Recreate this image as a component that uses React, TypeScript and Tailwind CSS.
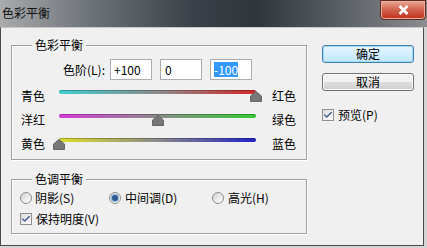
import { Check } from "lucide-react";

const sliders = [
  { left: "青色", right: "红色", value: 100, grad: "bg-[linear-gradient(to_right,#3fcfcf,#8a8a8a_50%,#d42828)]" },
  { left: "洋红", right: "绿色", value: 0, grad: "bg-[linear-gradient(to_right,#d93cd9,#8a8a8a_50%,#33cc33)]" },
  { left: "黄色", right: "蓝色", value: -100, grad: "bg-[linear-gradient(to_right,#dede2a,#8a8a8a_50%,#2323c8)]" },
];

function Thumb({ value }: { value: number }) {
  return (
    <svg
      width="12"
      height="11"
      viewBox="0 0 12 11"
      className="absolute top-[1px] -translate-x-1/2"
      style={{ left: `${((value + 100) / 200) * 100}%` }}
    >
      <path d="M6 0.5 L11.5 5 L11.5 10.5 L0.5 10.5 L0.5 5 Z" fill="#777" stroke="#666" />
    </svg>
  );
}

function CheckBox() {
  return (
    <span className="w-[12px] h-[12px] border border-[#8f8f8f] bg-[linear-gradient(135deg,#dcdcdc,#ffffff)] flex items-center justify-center">
      <Check className="w-[10px] h-[10px] text-[#4a5f97]" strokeWidth={3.5} />
    </span>
  );
}

function Radio({ on }: { on?: boolean }) {
  return (
    <span className="w-[12px] h-[12px] rounded-full border border-[#8f8f8f] bg-[linear-gradient(135deg,#d4d4d4,#ffffff)] flex items-center justify-center">
      {on && <span className="w-[6px] h-[6px] rounded-full bg-[#2f5c8c] shadow-[0_0_0_1px_#8fb8e0]" />}
    </span>
  );
}

function Group({ title, className, children }: { title: string; className: string; children: React.ReactNode }) {
  return (
    <div className={`relative border border-[#a0a0a0] shadow-[1px_1px_0_#fff,inset_1px_1px_0_#fff] ${className}`}>
      <span className="absolute -top-[9px] left-[20px] px-[3px] bg-[#f0f0f0] leading-[16px]">{title}</span>
      {children}
    </div>
  );
}

export default function App() {
  return (
    <div className="w-[427px] h-[248px] bg-[#d4d4d4] flex flex-col text-[12px] text-black font-['Noto_Sans_CJK_SC',sans-serif] overflow-hidden">
      <div className="h-[27px] shrink-0 flex justify-between bg-[linear-gradient(to_right,#a9abad,#70757a_20%,#3b4148_45%,#2f353b_60%,#5b6066_80%,#8a8d90)]">
        <span className="pl-[2px] pt-[5px] leading-[16px] text-[#111]">色彩平衡</span>
        <div className="w-[46px] h-[20px] mr-[1px] rounded-b-[4px] border border-[#5a2a22] bg-[linear-gradient(to_bottom,#e9a898,#d0604a_50%,#c0301c)] flex items-center justify-center shadow-[inset_0_0_0_1px_#f0b0a0]">
          <svg width="11" height="10" viewBox="0 0 11 10">
            <path d="M1.5 1 L9.5 9 M9.5 1 L1.5 9" stroke="#fff" strokeWidth="2.6" />
          </svg>
        </div>
      </div>

      <div className="w-[424px] h-[219px] border border-[#4a4a4a] border-t-[#c8c8c8] bg-[#f0f0f0] flex">
        <div className="w-[306px] pl-[10px] flex flex-col">
          <Group title="色彩平衡" className="mt-[17px] h-[115px] pt-[13px]">
            <div className="flex items-center h-[21px]">
              <span className="w-[98px] text-right pr-[5px]">色阶(L):</span>
              <div className="flex gap-[8px]">
                <span className="w-[42px] h-[21px] border border-[#abadb3] bg-white pl-[3px] leading-[19px]">+100</span>
                <span className="w-[42px] h-[21px] border border-[#abadb3] bg-white pl-[4px] leading-[19px]">0</span>
                <span className="w-[42px] h-[21px] border border-[#abadb3] bg-white pl-[3px] pt-[2px]">
                  <span className="block w-fit bg-[#3399ff] text-white leading-[15px]">-100</span>
                </span>
              </div>
            </div>
            <div className="mt-[4px] flex flex-col pl-[9px]">
              {sliders.map((s) => (
                <div key={s.left} className="h-[24px] flex items-center">
                  <span className="w-[38px]">{s.left}</span>
                  <div className="relative w-[197px] h-[12px]">
                    <div className={`h-[4px] rounded-[2px] shadow-[inset_0_1px_0_rgba(0,0,0,0.25)] ${s.grad}`} />
                    <Thumb value={s.value} />
                  </div>
                  <span className="ml-[16px]">{s.right}</span>
                </div>
              ))}
            </div>
          </Group>

          <Group title="色调平衡" className="mt-[19px] h-[55px] pt-[10px] pl-[8px]">
            <div className="flex h-[16px] items-center">
              <label className="w-[89px] flex items-center gap-[3px]">
                <Radio />
                阴影(S)
              </label>
              <label className="w-[103px] flex items-center gap-[4px]">
                <Radio on />
                中间调(D)
              </label>
              <label className="flex items-center gap-[4px]">
                <Radio />
                高光(H)
              </label>
            </div>
            <label className="mt-[5px] flex h-[16px] items-center gap-[4px]">
              <CheckBox />
              保持明度(V)
            </label>
          </Group>
        </div>

        <div className="pl-[15px] pt-[17px] flex flex-col">
          <button className="w-[92px] h-[18px] rounded-[3px] border border-[#3c7fb1] bg-[linear-gradient(to_bottom,#eaf6fd,#bee6fd)] shadow-[inset_0_0_0_1px_#a7d9f5] leading-[14px]">
            确定
          </button>
          <button className="mt-[10px] w-[92px] h-[18px] rounded-[3px] border border-[#707070] bg-[linear-gradient(to_bottom,#f2f2f2_50%,#dddddd_50%,#cfcfcf)] shadow-[inset_0_0_0_1px_#fcfcfc] leading-[14px]">
            取消
          </button>
          <label className="mt-[17px] flex items-center gap-[4px] h-[14px]">
            <CheckBox />
            预览(P)
          </label>
        </div>
      </div>
    </div>
  );
}
